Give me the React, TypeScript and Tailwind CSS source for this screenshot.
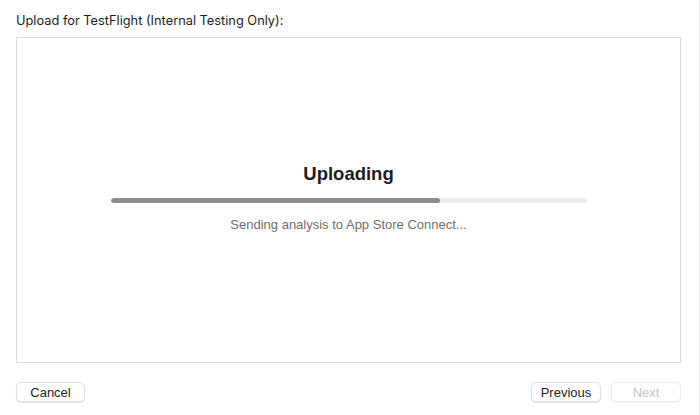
import React from "react";

export default function App() {
  const progress = 69.3;
  return (
    <div
      className="w-[700px] h-[415px] bg-white flex flex-col pl-4 pr-[18px] border-r border-[#ececec] text-[#1d1d1f]"
      style={{ fontFamily: '"Liberation Sans", Arial, sans-serif' }}
    >
      <div
        className="h-[37px] flex items-center pt-[6px] text-[12.8px] leading-none"
        style={{ fontFamily: 'Inter, "Liberation Sans", sans-serif' }}
      >
        Upload for TestFlight (Internal Testing Only):
      </div>
      <div className="h-[326px] border border-[#dcdcdc] flex flex-col items-center justify-center pb-[4px]">
        <h1 className="text-[18.5px] font-bold leading-none">Uploading</h1>
        <div className="mt-[14px] w-[476px] h-[5px] rounded-full bg-[#ededed] overflow-hidden">
          <div className="h-full rounded-full bg-[#8e8e8e]" style={{ width: `${progress}%` }} />
        </div>
        <p className="mt-[15px] text-[13px] leading-none text-[#6e6e6e]">
          Sending analysis to App Store Connect...
        </p>
      </div>
      <div className="flex items-center justify-between pt-[19px]">
        <button className="w-[69px] h-[20px] rounded-[5px] bg-white border border-[#e2e2e2] shadow-[0_1px_1px_rgba(0,0,0,0.12)] text-[13px] leading-none text-[#1d1d1f]">
          Cancel
        </button>
        <div className="flex gap-[10px]">
          <button className="w-[70px] h-[20px] rounded-[5px] bg-white border border-[#e2e2e2] shadow-[0_1px_1px_rgba(0,0,0,0.12)] text-[13px] leading-none text-[#1d1d1f]">
            Previous
          </button>
          <button className="w-[70px] h-[20px] rounded-[5px] bg-white border border-[#ececec] shadow-[0_1px_1px_rgba(0,0,0,0.05)] text-[13px] leading-none text-[#c4c4c4]">
            Next
          </button>
        </div>
      </div>
    </div>
  );
}
